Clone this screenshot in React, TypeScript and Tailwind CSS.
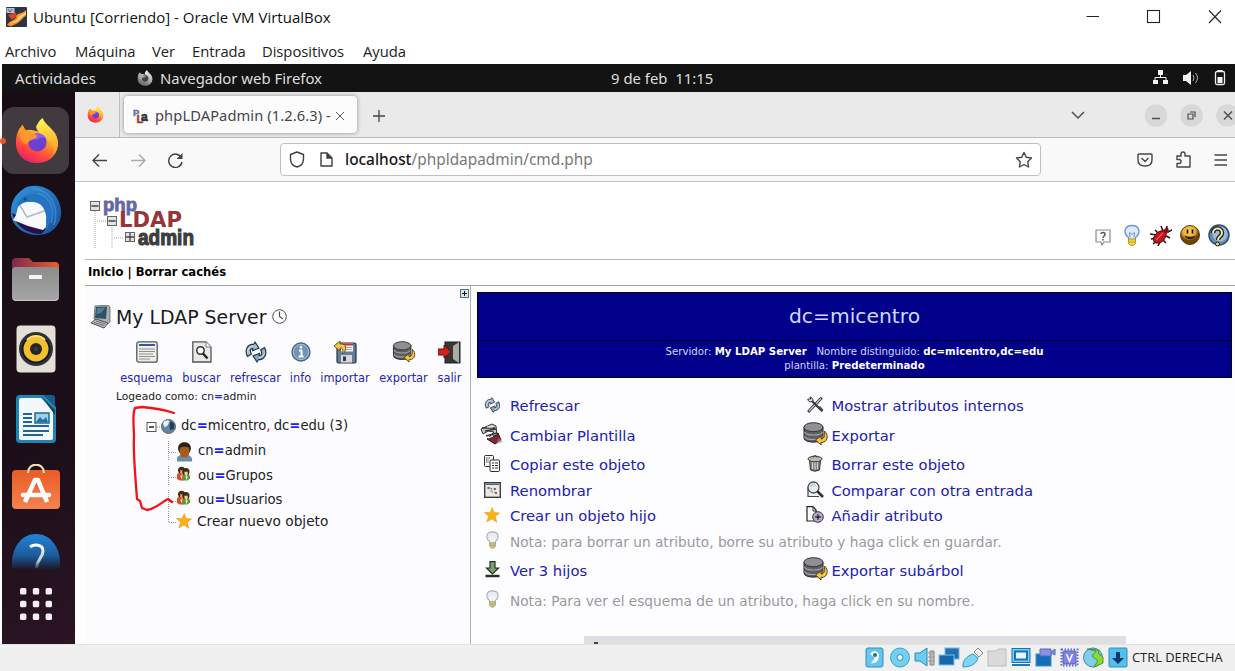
import React from "react";

type P = { className?: string };

/* ---------- Desktop icons ---------- */

const Firefox = ({ className, gray }: P & { gray?: boolean }) => {
  const id = gray ? "g" : "c";
  return (
    <svg className={className} viewBox="0 0 46 48">
      <defs>
        <linearGradient id={`ff-${id}`} x1="0.85" y1="0.05" x2="0.3" y2="1">
          <stop offset="0" stopColor={gray ? "#ddd" : "#fff04a"} />
          <stop offset="0.35" stopColor={gray ? "#bbb" : "#ffa52a"} />
          <stop offset="0.7" stopColor={gray ? "#888" : "#ff4a3c"} />
          <stop offset="1" stopColor={gray ? "#666" : "#e81f6e"} />
        </linearGradient>
        <linearGradient id={`fy-${id}`} x1="0.5" y1="0" x2="0.6" y2="1">
          <stop offset="0" stopColor={gray ? "#eee" : "#fff44f"} />
          <stop offset="1" stopColor={gray ? "#aaa" : "#ff9a26"} />
        </linearGradient>
      </defs>
      <path d="M4 12 L8 7 L11 13 C16 11 20 13 24 14 L30 10 C40 12 46 20 45 29 C43 41 34 47 23 47 C10 47 1 38 1 26 C1 20 2 16 4 12Z" fill={`url(#ff-${id})`} />
      <path d="M22 9 C24 5 26 2 29 0 C31 7 40 11 43 18 C46 26 45 33 40 38 C41 31 39 26 34 22 C30 16 23 16 22 9Z" fill={`url(#fy-${id})`} />
      <circle cx="23.500" cy="25.500" r="9.500" fill={gray ? "#444" : "#6b3fd0"} />
      <path d="M15 20 C19 15 29 14 33 22 C28 19 25 21 23 23Z" fill={gray ? "#666" : "#9059ff"} />
      <path d="M4 12 L8 8 C9 13 17 15 23 18 C24 22 17 22 14 25 C11 29 8 27 6 22Z" fill={gray ? "#aaa" : "#ff9a2a"} opacity="0.9" />
    </svg>
  );
};

const Thunderbird = () => (
  <svg className="h-[51px] w-[52px]" viewBox="0 0 52 51">
    <defs>
      <linearGradient id="tb" x1="0" y1="0" x2="1" y2="1">
        <stop offset="0" stopColor="#2e96dd" />
        <stop offset="1" stopColor="#1a4e9e" />
      </linearGradient>
    </defs>
    <path d="M12 5 C18 -1 33 -1 42 7 C51 15 54 30 48 39 C44 46 37 50 28 50 C14 50 3 42 1 30 C0 18 5 10 12 5Z" fill="url(#tb)" />
    <path d="M2 28 C6 42 18 49 31 49 L36 44 L12 33Z" fill="#25124a" />
    <path d="M8 22 L13 17 L28 16 L36 19 L38 28 L36 35 L37 41 L33 45 L18 41 L3 35 L6 30Z" fill="#f8f9fc" />
    <path d="M9 19 L17 32 L37 25" fill="none" stroke="#b4b9c6" strokeWidth="1.500" />
    <path d="M7 22 C7 12 20 6 32 11 C44 17 44 34 35 47 C37 38 38 27 31 20 C24 15 13 16 7 22Z" fill="#2472c2" />
    <path d="M22 3 C39 5 50 20 44 40M28 8 C42 13 45 26 41 38" fill="none" stroke="#4a9ce0" strokeWidth="1.800" opacity=".55" />
    <circle cx="15" cy="14" r="1.500" fill="#0b4f78" />
  </svg>
);

const Files = () => (
  <svg className="h-[43px] w-[47px]" viewBox="0 0 47 43">
    <defs>
      <linearGradient id="fo" x1="0" x2="1"><stop offset="0" stopColor="#7d2850" /><stop offset="1" stopColor="#e9602c" /></linearGradient>
      <linearGradient id="fg" x1="0" x2="0" y1="0" y2="1"><stop offset="0" stopColor="#8d8d8d" /><stop offset="1" stopColor="#a5a5a5" /></linearGradient>
    </defs>
    <path d="M0 4 Q0 0 4 0 H17 L21 4 H43 Q47 4 47 8 V25 H0Z" fill="url(#fo)" />
    <rect y="9" width="47" height="34" rx="4" fill="url(#fg)" />
    <path d="M1 41 Q3 43 5 42.500 H42 Q45 42.500 46 40" fill="none" stroke="#c4c4c4" />
    <rect x="17" y="17" width="13" height="4" rx="1" fill="#f5f5f5" />
  </svg>
);

const Rhythmbox = () => (
  <svg className="h-[48px] w-[40px]" viewBox="0 0 40 48">
    <rect x=".5" y=".5" width="39" height="47" rx="4" fill="#e4e0d8" />
    <circle cx="20" cy="24" r="17" fill="#30343a" />
    <circle cx="20" cy="24" r="14.500" fill="#191b20" />
    <circle cx="20" cy="24" r="12.500" fill="#f5be2b" />
    <path d="M11 15 A12 12 0 0 1 29 15" stroke="#ffe07a" strokeWidth="2" fill="none" />
    <circle cx="20" cy="24" r="6" fill="#22252a" />
    <circle cx="20" cy="24" r="2" fill="#3b3e44" />
  </svg>
);

const Writer = () => (
  <svg className="h-[48px] w-[40px]" viewBox="0 0 40 48">
    <path d="M4 0 H28 L40 12 V44 Q40 48 36 48 H4 Q0 48 0 44 V4 Q0 0 4 0Z" fill="#2384b4" />
    <path d="M28 0 H36 Q39 0 39 3 V11Z" fill="#155f8b" />
    <path d="M5 3 H25 L37 15 V43 Q37 45 35 45 H5 Q3 45 3 43 V5 Q3 3 5 3Z" fill="#f3f8fb" />
    <path d="M25 1 L39 15 V20Z" fill="#0e4265" />
    <path d="M7 19h9M7 23h9M7 27h9M7 31h26M7 36h26M7 40h20" stroke="#1f6796" strokeWidth="2.200" />
    <rect x="19" y="18" width="14" height="10" fill="#9cd2f0" stroke="#1f6796" strokeWidth="1.500" />
    <path d="M20 27 L24 22 L27 25 L30 22 L32 27Z" fill="#24719f" />
  </svg>
);

const Software = () => (
  <svg className="h-[45px] w-[48px]" viewBox="0 0 48 45">
    <defs><linearGradient id="so" x1="0" x2="0" y1="0" y2="1"><stop offset="0" stopColor="#e95b25" /><stop offset="1" stopColor="#f3834f" /></linearGradient></defs>
    <rect y="6" width="48" height="39" rx="4" fill="url(#so)" />
    <path d="M16 9 C16 -2 32 -2 32 9" fill="none" stroke="#f3dcb8" strokeWidth="2.200" />
    <path d="M13 38 L23 16 H26 L35 38" fill="none" stroke="#fff" strokeWidth="4.500" strokeLinejoin="round" />
    <path d="M11 31 H37" stroke="#fff" strokeWidth="4.500" strokeLinecap="round" />
  </svg>
);

const Help = () => (
  <svg className="h-[36px] w-[48px]" viewBox="0 0 48 36">
    <defs>
      <linearGradient id="he" x1="0" x2="0" y1="0" y2="1"><stop offset="0" stopColor="#2485d8" /><stop offset=".6" stopColor="#1b5b9b" /><stop offset="1" stopColor="#1c1322" /></linearGradient>
      <linearGradient id="hq" x1="0" x2="0" y1="0" y2="1"><stop offset="0" stopColor="#fff" /><stop offset=".7" stopColor="#bcc6d2" /><stop offset="1" stopColor="#33405a" /></linearGradient>
    </defs>
    <path d="M0 36 C-2 16 8 0 24 0 C40 0 50 16 48 36Z" fill="url(#he)" />
    <path d="M18 13 C22 10 31 10 31 17 C31 24 25 25 24.500 34" fill="none" stroke="url(#hq)" strokeWidth="3" />
  </svg>
);

const AppsGrid = () => (
  <svg className="h-8 w-8" viewBox="0 0 32 32" fill="#f4eef4">
    {[0, 12.8, 25.6].map((y) => [0, 12.8, 25.6].map((x) => <rect key={`${x}-${y}`} x={x} y={y} width="6.400" height="6.400" rx="1.500" />))}
  </svg>
);

const VBoxLogo = () => (
  <svg className="h-5 w-[21px]" viewBox="0 0 21 20">
    <rect width="21" height="20" rx="1" fill="#2d3545" />
    <path d="M2 8 L9 5 L11 9 L6 13Z" fill="#d8432a" />
    <path d="M1 18 C4 13 9 14 10 10 C11 5 15 8 20 3 V9 C17 10 16 13 13 15 C10 18 8 17 5 19.500Z" fill="#f8941f" />
    <path d="M4 17 C8 13 11 15 12 11 C13 8 17 8 20 5 V7 C17 9 15 11 13 13 C10 16 7 15 4 17Z" fill="#ffd596" />
    <rect x=".5" y="1" width="8" height="5" fill="#b6bfc9" />
    <path d="M2 2l2 3 2-3" stroke="#555f70" fill="none" />
  </svg>
);

/* ---------- Page icons ---------- */

const RefreshArrows = ({ className }: P) => (
  <svg className={className} viewBox="0 0 22 22" strokeLinejoin="round">
    {["", "rotate(180 11 11)"].map((t) => (
      <g key={t} transform={t}>
        <path d="M2.500 15.500 C-1 9 3 2.500 8.500 3.500 L10 1 L14 7 L7.500 9.800 L7.800 7.300 C5 7.500 4.500 10 6.500 13 Z" fill={t ? "#8aa5c0" : "#a3bace"} stroke="#26374a" strokeWidth="1.200" />
        <path d="M3 12 C2 8 4.500 5 8 5.300" fill="none" stroke="#dbe6ef" strokeWidth="1" />
      </g>
    ))}
  </svg>
);

const Database = ({ className }: P) => (
  <svg className={className} viewBox="0 0 25 24">
    <path d="M1 5 V16 C1 21.500 20 21.500 20 16 V5Z" fill="#5c5e60" stroke="#222" />
    <path d="M1.500 10 C3 14 18 14 19.500 10M1.500 14.500 C3 18.500 18 18.500 19.500 14.500" fill="none" stroke="#a4a6a8" strokeWidth="1.100" />
    <ellipse cx="10.500" cy="5.200" rx="9.500" ry="4.500" fill="#8e9092" stroke="#333" />
    <path d="M21.500 9 C26 13 25 20.500 18 20.500 V23 L12.500 18 L18 14 V17 C21 17 22 14 21.500 9Z" fill="#efc64a" stroke="#5a3f0c" />
  </svg>
);

const Star = ({ className }: P) => (
  <svg className={className} viewBox="0 0 16 16">
    <path d="M8.300.5 L10 5.500 L15.500 6 L11.300 9.400 L12.800 15.300 L8 12 L2.800 14.800 L4.600 9.300 L.5 5.500 L6.200 5.400Z" fill="#fcaf1b" stroke="#e89b16" strokeWidth=".6" />
  </svg>
);

const Bulb = ({ className, lit }: P & { lit?: boolean }) => (
  <svg className={className} viewBox="0 0 16 22">
    <path d="M4.500 13 C-1 9 0 1 8 1 C16 1 17 9 11.500 13 V16 H4.500Z" fill={lit ? "#dceafc" : "#e9ebf0"} stroke={lit ? "#6d95cc" : "#a9aeb8"} strokeWidth="1.300" />
    <path d="M6 13 L5.500 8 L8 10 L10.500 8 L10 13" fill="none" stroke={lit ? "#7795c0" : "#fff"} />
    <path d="M4.500 14.500 H11.500 V19 L9.500 21 H6.500 L4.500 19Z" fill={lit ? "#f2d33a" : "#cfc97c"} stroke={lit ? "#a88c16" : "#979350"} strokeWidth=".8" />
    <path d="M5 17.500h6" stroke={lit ? "#c29c12" : "#888"} strokeWidth=".8" />
  </svg>
);

const Computer = () => (
  <svg className="h-6 w-[22px]" viewBox="0 0 22 24">
    <path d="M5 1 L18 0 L20 2 V17 L16 20 L4 14Z" fill="#a9afb2" stroke="#53585a" strokeWidth=".7" />
    <path d="M6 2 L17 1.500 L16 14 L5 13Z" fill="#2f5269" />
    <path d="M7 3 L15.500 2.500 L11 8 L6.500 9Z" fill="#547c92" />
    <path d="M1 18 L6 14 L18 18 L14 23Z" fill="#b9bab3" stroke="#4d5154" />
    <path d="M4 17.500 L14 20.500M6 16 L15.500 19" stroke="#73777a" />
  </svg>
);

const Clock = () => (
  <svg className="h-[15px] w-[15px]" viewBox="0 0 15 15" fill="none" stroke="#4b4b4b">
    <circle cx="7.500" cy="7.500" r="6.800" fill="#fff" /><path d="M7.500 2.500V7.500L11 10" strokeWidth="1.200" />
  </svg>
);

const Schema = () => (
  <svg className="h-[22px] w-[22px]" viewBox="0 0 22 22">
    <rect x=".8" y=".8" width="20.400" height="20.400" rx="2" fill="#eeefeb" stroke="#555753" strokeWidth="1.300" />
    <path d="M3 4h16" stroke="#204a87" strokeWidth="1.800" />
    <path d="M3 8h16M3 10.500h16M3 13h14M3 15.500h16M3 18h11" stroke="#90928e" strokeWidth="1.100" />
  </svg>
);

const Search = () => (
  <svg className="h-[22px] w-5" viewBox="0 0 20 22">
    <path d="M.8 .8 H14 L19 6 V21 H.8Z" fill="#e8e9e5" stroke="#555753" strokeWidth="1.300" />
    <path d="M14 1 V6 H19" fill="#fff" stroke="#777" />
    <circle cx="8.500" cy="9.500" r="3.700" fill="#fafafa" stroke="#333" strokeWidth="1.500" />
    <path d="M11 12.500 L15.500 17.500" stroke="#222" strokeWidth="2.500" />
  </svg>
);

const Info = () => (
  <svg className="h-5 w-5" viewBox="0 0 20 20">
    <circle cx="10" cy="10" r="9" fill="#7391b5" stroke="#4b6689" strokeWidth="1.400" />
    <circle cx="10" cy="10" r="7.600" fill="none" stroke="#a9bed6" />
    <path d="M8 8.500h2.500V14M7.500 14.500h5" stroke="#fff" strokeWidth="2" fill="none" /><circle cx="10" cy="5.300" r="1.300" fill="#fff" />
  </svg>
);

const Import = () => (
  <svg className="h-[23px] w-[23px]" viewBox="0 0 23 23">
    <rect x="3" y="2" width="19" height="20" rx="1.500" fill="#637e9a" stroke="#29323b" strokeWidth="1.200" />
    <rect x="7" y="2.500" width="12" height="8" fill="#f4f4f2" />
    <path d="M7 3.500h12" stroke="#cc2c2c" strokeWidth="2" /><path d="M8 6.500h10M8 8.500h10" stroke="#aaa" />
    <rect x="7" y="14" width="11" height="7.500" fill="#d7d9d8" /><rect x="9" y="15.500" width="3" height="4.500" fill="#303a48" />
    <path d="M0 5 L6 0 L6 3 C13 2 13 9 9 13 C9 9 9 7 6 7 V10Z" fill="#f1c64d" stroke="#674b13" strokeWidth=".9" />
  </svg>
);

const Exit = () => (
  <svg className="h-[23px] w-[23px]" viewBox="0 0 23 23">
    <rect x="7" y="1" width="15" height="21" fill="#343735" stroke="#222" />
    <path d="M15 5 L21 1 V22 L15 18Z" fill="#a8ada8" />
    <path d="M0 8 H6 V4 L13 11 L6 17 V14 H0Z" fill="#d62020" stroke="#6b0b0b" />
  </svg>
);

const Globe = () => (
  <svg className="h-[15px] w-[15px]" viewBox="0 0 16 16">
    <circle cx="8" cy="8" r="7.500" fill="#62849e" stroke="#556775" />
    <path d="M2 5 C5 0 9 1 9 3 L7 7 L4 9Z" fill="#dce6ec" /><path d="M10 2 L14 5 L14 10 L10 12 L9 8Z" fill="#263e57" /><circle cx="5" cy="4" r="2.200" fill="#fff" opacity=".6" />
  </svg>
);

const Person = () => (
  <svg className="h-[21px] w-[17px]" viewBox="0 0 18 21">
    <path d="M1 21 V18 C2 14 6 14 9 14 C13 14 16 15 17 18 V21Z" fill="#6f8cab" />
    <path d="M2.500 9 C0-2 18-2 15.500 9 L14 12 H4Z" fill="#27211f" />
    <path d="M4 7 C6 5 12 5 14 7 V11 C14 15 12 17 9 17 C6 17 4 15 4 11Z" fill="#a85b16" />
  </svg>
);

const Group = () => (
  <svg className="h-[15px] w-[15px]" viewBox="0 0 16 15">
    <path d="M1 13 V9 C2 6 6 6 8 9 V15 H4Z" fill="#d84a22" /><path d="M7 15 V9 C9 6 14 6 15 11 V13 L12 15Z" fill="#5c993d" />
    <circle cx="6" cy="4" r="3.800" fill="#4a2c17" /><path d="M4.500 4h3.500v3l-1.500 2-2-2z" fill="#e9a462" />
    <circle cx="10.500" cy="5.500" r="3.900" fill="#3a2e22" /><path d="M9 5.500h3.500v3l-1.500 2-2-2z" fill="#f0d07e" />
    <path d="M4.500 9.500 L6 14 L7 9.500Z" fill="#f4e4df" /><path d="M10 10.500 L11.500 14.500 L12.500 10.500Z" fill="#f1f5e8" />
  </svg>
);

const Template = () => (
  <svg className="h-[22px] w-6" viewBox="0 0 24 22">
    <path d="M7 16 L18 10 L21 17 L15 21Z" fill="#822536" stroke="#3b1118" />
    <path d="M19 15 L23 19 L16 21Z" fill="#999" opacity=".6" />
    <path d="M1 6 L12 1 L16 3 L17 12 L9 14 L14 9 L8 8 L3 11Z" fill="#c5cac8" stroke="#2e3230" />
    <path d="M2 5 H15M5 8 L16 6M6 13 L17 10M9 16 L18 12" stroke="#343836" strokeWidth="1.300" />
    <path d="M7 4H13M8 15 L13 13" stroke="#fff" strokeWidth="1.200" />
  </svg>
);

const Copy = () => (
  <svg className="h-[17px] w-4" viewBox="0 0 16 17" fill="#f9f9f9" stroke="#303030">
    <rect x=".5" y=".5" width="9" height="11" rx="1" /><path d="M2 3h4M2 5h3M2 7h3" strokeDasharray="1.500 1" /><rect x="6" y="5" width="9.500" height="11.500" rx="1" /><path d="M8 8h2M11 8h3M8 10.500h2M11 10.500h3M8 13h2M11 13h3" />
  </svg>
);

const Rename = () => (
  <svg className="h-4 w-[17px]" viewBox="0 0 17 16">
    <rect x=".7" y=".7" width="15.600" height="14.600" fill="#e7e8e2" stroke="#333" strokeWidth="1.300" />
    <path d="M2 2.300h13" stroke="#3e6077" strokeWidth="1.300" /><path d="M4 6h3v4h4M7 7h4" fill="none" stroke="#777" strokeDasharray="1.500 1" /><path d="M3.500 5h2v2h-2zM10 6h2v2h-2zM11 10h2v2h-2z" fill="#866" />
  </svg>
);

const Down = () => (
  <svg className="h-[17px] w-[15px]" viewBox="0 0 15 17">
    <path d="M5 .7 H10 V7 H13.500 L7.500 13 L1.500 7 H5Z" fill="#7ca36e" stroke="#243123" strokeWidth="1.200" /><path d="M.5 15H14.500" stroke="#243123" strokeWidth="2.500" />
  </svg>
);

const Tools = () => (
  <svg className="h-[17px] w-[17px]" viewBox="0 0 17 17">
    <path d="M2 15 L14 2.500" stroke="#333" strokeWidth="3" strokeLinecap="round" /><path d="M2 15 L14 2.500" stroke="#c8cccc" strokeWidth="1.200" />
    <path d="M3 3 L14 14" stroke="#383838" strokeWidth="2.200" /><path d="M.8 3 C1 6 4 6.500 6 5 C6 3 5 1 3 1L4 3Z" fill="#ddd" stroke="#333" />
    <path d="M11 12 L13 10 L16.500 14 L14.500 16.200Z" fill="#444" />
  </svg>
);

const Trash = () => (
  <svg className="h-[17px] w-4" viewBox="0 0 16 17">
    <path d="M2.500 5 L3.500 15 Q8 17.500 12.500 15 L13.500 5Z" fill="#7e7f78" stroke="#333" /><path d="M5.500 7v7M8 7v7.500M10.500 7v7" stroke="#d1d2cc" strokeWidth="1.200" />
    <ellipse cx="8" cy="4" rx="7" ry="2.800" fill="#b9b9b2" stroke="#3e403c" /><path d="M6 2.500C6 0 10 0 10 2.500" fill="none" stroke="#333" />
  </svg>
);

const Compare = () => (
  <svg className="h-[17px] w-[17px]" viewBox="0 0 17 17">
    <path d="M1 6V15.500H12" fill="#eee" stroke="#444" strokeWidth="1.200" /><circle cx="6.500" cy="6.500" r="5.500" fill="#e5ecf0" stroke="#4a4a4a" strokeWidth="1.300" />
    <path d="M3 6 C4 3 7 3 9 5" fill="none" stroke="#a3b2bd" /><path d="M10 10L16 16" stroke="#303030" strokeWidth="2.600" />
  </svg>
);

const AddAttr = () => (
  <svg className="h-[17px] w-[18px]" viewBox="0 0 18 17">
    <path d="M1 .7H7L10 4V15H1Z" fill="#fff" stroke="#222" strokeWidth="1.200" /><path d="M7 1v4h4" fill="none" stroke="#333" />
    <circle cx="12" cy="11" r="5.300" fill="#b6a9c2" stroke="#393440" /><path d="M12 8.300v5.400M9.300 11h5.400" stroke="#252035" strokeWidth="1.300" />
  </svg>
);

const TopIcons = () => (
  <div className="mt-[41px] mr-[2px] grid h-6 w-[145px] grid-cols-5 items-center justify-items-center">
    <svg className="mt-1 h-[17px] w-4" viewBox="0 0 16 17">
      <path d="M1 1H15V13H9L7 16L6 13H1Z" fill="#fbfbfb" stroke="#8b8b8b" strokeWidth="1.200" /><path d="M6 5C6 3 10 3 10 5.500C10 7 8 7 8 9M8 10v1.500" stroke="#555" strokeWidth="1.500" fill="none" />
    </svg>
    <Bulb lit className="h-[23px] w-4" />
    <svg className="h-[22px] w-[23px]" viewBox="0 0 23 22">
      <path d="M1 10L8 11M2 15L8 14M4 20L9 16M9 22L11 18M12 2L14 7M18 2L17 6M19 8L23 6M17 12L21 14M14 16L17 19M6 6L9 9" stroke="#3c0808" strokeWidth="1.500" />
      <path d="M5 13C7 8 13 5 17 8C18 14 13 20 7 19C4 18 4 15 5 13Z" fill="#c1121c" stroke="#4c090b" />
      <path d="M14 6L19 3L20 8L17 10Z" fill="#871016" /><path d="M7 16L14 9" stroke="#f2606a" strokeWidth="1.300" />
    </svg>
    <svg className="h-5 w-5" viewBox="0 0 20 20">
      <defs><radialGradient id="smile" cx=".45" cy=".3"><stop offset="0" stopColor="#ffdc62" /><stop offset=".7" stopColor="#e5a52a" /><stop offset="1" stopColor="#6a420a" /></radialGradient></defs>
      <circle cx="10" cy="10" r="9.500" fill="url(#smile)" stroke="#5a3b10" /><path d="M7.500 4.500v4M12.500 4.500v4" stroke="#181008" strokeWidth="1.700" /><path d="M4.500 10.500C6 15.500 14 15.500 15.500 10.500Q10 13 4.500 10.500" fill="#33200e" />
    </svg>
    <svg className="h-[23px] w-[23px]" viewBox="0 0 23 23">
      <circle cx="12" cy="11" r="10" fill="#648db3" stroke="#354e65" strokeWidth="1.500" /><circle cx="13" cy="10" r="7.500" fill="#9cbbd4" />
      <path d="M6 9C6 3 15 3 15 9C15 13 11 12 11 16" fill="none" stroke="#211a10" strokeWidth="4.500" /><path d="M6 9C6 3 15 3 15 9C15 13 11 12 11 16" fill="none" stroke="#f3e6b6" strokeWidth="2" />
      <circle cx="10.500" cy="20" r="2" fill="#efdca0" stroke="#221a10" />
    </svg>
  </div>
);

const Logo = () => (
  <svg className="h-[54px] w-[108px]" viewBox="0 0 108 54">
    <path d="M6 14V52M8 24H17M23 30V52M25 41H34" stroke="#aaa" strokeDasharray="1 1" fill="none" />
    <g fill="#e2e2e2" stroke="#666"><rect x="1.500" y="4.500" width="9" height="9" /><rect x="18.500" y="19.500" width="9" height="9" /><rect x="36.500" y="35.500" width="9" height="9" /></g>
    <path d="M2.500 9h7M19.500 24h7M37 40h8M41 36v8" stroke="#444" strokeWidth="1.300" />
    <text x="14" y="13.500" fontSize="18" fontFamily="Liberation Sans" fontWeight="700" fill="#6666a6" stroke="#6666a6" strokeWidth=".8" textLength="34" lengthAdjust="spacingAndGlyphs">php</text>
    <text x="30" y="30" fontSize="20.500" fontFamily="DejaVu Sans" fontWeight="700" fill="#963439" textLength="63" lengthAdjust="spacingAndGlyphs">LDAP</text>
    <text x="49" y="48" fontSize="22.500" fontFamily="Liberation Sans" fontWeight="700" fill="#3d3d3d" stroke="#3d3d3d" strokeWidth="1.200" textLength="56" lengthAdjust="spacingAndGlyphs">admin</text>
  </svg>
);

/* ---------- Window chrome ---------- */

const TitleBar = () => (
  <div className="flex h-[34px] shrink-0 items-center pl-1.5 font-['Open_Sans',sans-serif] text-[#111]">
    <div className="mr-[6px] mb-[1px]"><VBoxLogo /></div>
    <span className="text-[15px] whitespace-nowrap">Ubuntu [Corriendo] - Oracle VM VirtualBox</span>
    <svg className="mr-[-1px] ml-auto h-4 w-[150px]" viewBox="0 0 150 16" fill="none" stroke="#222" strokeWidth="1.100">
      <path d="M.5 7.500H13M123 1.500L135 14M135 1.500L123 14" /><rect x="61.500" y="1.500" width="12" height="12" />
    </svg>
  </div>
);

const MenuBar = () => (
  <div className="flex h-[30px] shrink-0 items-center pt-[4px] pl-[5px] font-['Open_Sans',sans-serif] text-[14.800px] tracking-[-0.050px] text-[#222]">
    <span className="w-[70px]">Archivo</span><span className="w-[77px]">Máquina</span><span className="w-[40px]">Ver</span>
    <span className="w-[70px]">Entrada</span><span className="w-[101px]">Dispositivos</span><span>Ayuda</span>
  </div>
);

const TopBar = () => (
  <div className="flex h-[28px] shrink-0 items-center bg-[#131313] font-['Noto_Sans',sans-serif] text-[14.900px] text-[#dedede]">
    <span className="ml-[13px] w-[122px] tracking-[0.150px]">Actividades</span>
    <Firefox gray className="h-4 w-4" />
    <span className="ml-[7px] w-[451px]">Navegador web Firefox</span>
    <span className="whitespace-pre">9 de feb  11:15</span>
    <svg className="mr-2 ml-auto h-4 w-[75px]" viewBox="0 0 75 16" fill="#f2f2f2">
      <rect x="6" y="0" width="5" height="5" /><rect x="1" y="10" width="5" height="4" /><rect x="11" y="10" width="5" height="4" /><path d="M8.500 4v4M3 11V7.500H14V11" stroke="#f2f2f2" fill="none" />
      <path d="M31 5h3l5-4v14l-5-4h-3z" /><path d="M41 5q2 3 0 6M43.500 3q4 5 0 10" stroke="#aaa" fill="none" />
      <rect x="63.500" y="1.500" width="9" height="13" rx="1.500" stroke="#eee" strokeWidth="1.300" fill="none" /><rect x="65.500" y="7" width="5" height="6" /><rect x="65.500" width="5" height="1.500" />
    </svg>
  </div>
);

const Dock = () => (
  <div className="flex w-[73px] shrink-0 flex-col items-center bg-[linear-gradient(155deg,#170c14_0%,#1c0f19_65%,#2b1424_100%)] pr-[6px]">
    <div className="mt-[15px] flex h-[67px] w-[67px] shrink-0 items-center justify-center rounded-[12px] bg-[#413b40]">
      <i className="-ml-[1px] mr-[9px] h-[6px] w-[6px] shrink-0 rounded-full bg-[#e9541f]" /><Firefox className="mr-[11px] h-[46px] w-[44px] shrink-0" />
    </div>
    <div className="mt-[11px]"><Thunderbird /></div>
    <div className="mt-[22px]"><Files /></div>
    <div className="mt-6"><Rhythmbox /></div>
    <div className="mt-[22px]"><Writer /></div>
    <div className="mt-[21px]"><Software /></div>
    <div className="mt-[25px]"><Help /></div>
    <div className="mt-[18px]"><AppsGrid /></div>
  </div>
);

const FavIcon = () => (
  <svg className="h-4 w-4 overflow-visible" viewBox="0 0 16 16"><g fontFamily="Liberation Sans" fontWeight="700">
    <text x="0" y="8" fontSize="9.500" fill="#7372a3" stroke="#7372a3" strokeWidth=".5">P</text><text x="3.500" y="15" fontSize="11" fill="#963b42" stroke="#963b42" strokeWidth=".5">L</text><text x="8" y="13" fontSize="12" fill="#333" stroke="#333" strokeWidth=".7">a</text></g></svg>
);

const Tabs = () => (
  <div className="flex h-[46px] shrink-0 border-b border-[#b9b9bb] bg-[#eaeaeb] font-['Noto_Sans',sans-serif]">
    <div className="flex w-[45px] items-center justify-center border-r border-[#c0c0c0] pr-1"><Firefox className="h-[17px] w-[17px]" /></div>
    <div className="my-[4px] ml-[4px] flex w-[233px] items-center rounded-[4px] bg-[#fcfcfd] pt-[2px] pl-[9px] text-[14.700px] text-[#45454b] shadow-[0_0_4px_rgba(0,0,0,0.4)]">
      <FavIcon /><span className="ml-[6px] w-[178px] whitespace-nowrap tracking-[0.080px]">phpLDAPadmin (1.2.6.3) -</span>
      <svg className="ml-[3px] h-2 w-2" viewBox="0 0 8 8" stroke="#555"><path d="M0 0L8 8M8 0L0 8" /></svg>
    </div>
    <svg className="mt-[18px] ml-4 h-3 w-3" viewBox="0 0 12 12" stroke="#444" strokeWidth="1.300"><path d="M0 6h12M6 0v12" /></svg>
    <svg className="mt-[12px] ml-auto h-[23px] w-[164px] shrink-0" viewBox="0 0 164 23" fill="none" stroke="#505050" strokeWidth="1.500">
      <path d="M1 8L7 14L13 8" /><g fill="#d8d8d8" stroke="none"><circle cx="85" cy="11.500" r="11.300" /><circle cx="120.500" cy="11.500" r="11.300" /><circle cx="156.500" cy="11.500" r="11.300" /></g>
      <path d="M81 14.500h8M153 7.500L161 15.500M161 7.500L153 15.500" /><path d="M117 10h5v5h-5zM119 8h5v5" strokeWidth="1.200" />
    </svg>
  </div>
);

const Toolbar = () => (
  <div className="flex h-[44px] shrink-0 items-center border-b border-[#c5c5c8] bg-[#f9f9fa]">
    <svg className="ml-[17px] h-4 w-[92px]" viewBox="0 0 92 16" fill="none" stroke="#444" strokeWidth="1.400">
      <path d="M15 8.500H1M7 2.500L1 8.500L7 14.500" /><path d="M39 8.500H53M47 2.500L53 8.500L47 14.500" stroke="#aaa" /><path d="M89.500 6A6.700 6.700 0 1 0 90 10" /><path d="M90.500 1V7H84.500Z" fill="#444" stroke="none" />
    </svg>
    <div className="ml-[96px] flex h-[33px] w-[761px] items-center rounded-[4px] border border-[#bfbfc2] bg-white pl-2">
      <svg className="h-[17px] w-[46px]" viewBox="0 0 46 17" fill="none" stroke="#3f3f3f" strokeWidth="1.400">
        <path d="M8 1L14.500 3.500V8C14.500 12 11.500 15 8 16C4.500 15 1.500 12 1.500 8V3.500Z" strokeLinejoin="round" /><path d="M32 2H38L43 7V15H32Z" strokeLinejoin="round" /><path d="M38 2V7H43" fill="#444" />
      </svg>
      <span className="ml-[10px] font-['Noto_Sans',sans-serif] text-[15.400px] whitespace-nowrap text-[#777]"><b className="font-medium text-[#151515]">localhost</b>/phpldapadmin/cmd.php</span>
      <svg className="mr-[7px] ml-auto h-[18px] w-[18px]" viewBox="0 0 18 18" fill="none" stroke="#454545" strokeWidth="1.400" strokeLinejoin="round"><path d="M9 1.500L11.300 6.200L16.500 7L12.700 10.700L13.600 16L9 13.500L4.400 16L5.300 10.700L1.500 7L6.700 6.200Z" /></svg>
    </div>
    <svg className="mr-[7px] ml-auto h-[18px] w-[91px]" viewBox="0 0 91 18" fill="none" stroke="#454545" strokeWidth="1.400" strokeLinejoin="round">
      <path d="M2 3H14Q15 3 15 4V9Q15 15 8 15Q1 15 1 9V4Q1 3 2 3M4.500 7L8 10.500L11.500 7" />
      <path d="M40 5H44V3Q44 1 46 1Q48 1 48 3V5H53V16H40V12.500H42Q44 12.500 44 10.500Q44 8.500 42 8.500H40Z" /><path d="M77.500 4H90M77.500 9H90M77.500 14H90" />
    </svg>
  </div>
);

/* ---------- phpLDAPadmin ---------- */

const tools = [
  { label: "esquema", w: "w-[53px]", icon: <Schema /> },
  { label: "buscar", w: "w-[39px]", icon: <Search /> },
  { label: "refrescar", w: "w-[51px]", icon: <RefreshArrows className="h-[22px] w-[22px]" /> },
  { label: "info", w: "w-[21px]", icon: <Info /> },
  { label: "importar", w: "w-[50px]", icon: <Import /> },
  { label: "exportar", w: "w-[49px]", icon: <Database className="h-[22px] w-6" /> },
  { label: "salir", w: "w-[25px]", icon: <Exit /> },
];

const Eq = () => <b className="text-[#2323f4]">=</b>;

const Branch = ({ className, last }: P & { last?: boolean }) => (
  <svg className={className} viewBox="0 0 8 20" fill="none" stroke="#999" strokeDasharray="1 1">
    <path d={last ? "M.5 0V11.500H8" : "M.5 0V20M1 11.500H8"} />
  </svg>
);

const TreePane = () => (
  <div className="relative flex w-[386px] shrink-0 flex-col border-r border-[#a9abc8] bg-[#fcfcff] text-[#222]">
    <svg className="absolute top-[3px] right-[1px] h-[9px] w-[9px]" viewBox="0 0 9 9"><rect x=".5" y=".5" width="8" height="8" fill="#dce3e6" stroke="#527080" /><path d="M2 4.500h5M4.500 2v5" stroke="#111" /></svg>
    <div className="mt-[17px] flex h-[28px] items-center pl-[5px]">
      <Computer /><span className="ml-[4px] w-[152px] text-[18.900px] whitespace-nowrap text-[#1b1b1b]">My LDAP Server</span><span className="mb-[2px] ml-1"><Clock /></span>
    </div>
    <div className="mt-[9px] flex gap-[9px] pl-[36px] text-[11.400px] text-[#2626ad]">
      {tools.map((t) => (
        <div key={t.label} className={`-ml-[1px] mr-[1px] flex flex-col items-center ${t.w}`}>
          <div className="flex h-6 items-center justify-center">{t.icon}</div>
          <span className="mt-[7px] leading-[14px] whitespace-nowrap">{t.label}</span>
        </div>
      ))}
    </div>
    <div className="mt-[5px] pl-[31px] text-[10.700px] leading-[14px]">Logeado como: cn<Eq />admin</div>
    <div className="mt-[9px] text-[13.200px] whitespace-nowrap">
      <div className="flex h-[26px] items-center pl-[61px]">
        <svg className="h-[15px] w-[15px]" viewBox="0 0 15 15"><rect x="1" y="3.500" width="9" height="9" fill="#fff" stroke="#555" /><path d="M3 8h5" stroke="#111" strokeWidth="1.400" /><path d="M11 8h4" stroke="#888" strokeDasharray="1 1" /></svg>
        <Globe /><span className="ml-[5px]">dc<Eq />micentro<span className="tracking-[-0.500px] text-red-600">, </span>dc<Eq />edu (3)</span>
      </div>
      <div className="flex h-[24px] items-center pl-[83px]"><Branch className="h-5 w-[8px]" /><Person /><span className="ml-[5px]">cn<Eq />admin</span></div>
      <div className="flex h-[25px] items-center pl-[83px]"><Branch className="h-5 w-[8px]" /><span className="mb-1"><Group /></span><span className="ml-[7px]">ou<Eq />Grupos</span></div>
      <div className="flex h-[23px] items-center pl-[83px]"><Branch className="h-5 w-[8px]" /><span className="mb-1"><Group /></span><span className="ml-[7px]">ou<Eq />Usuarios</span></div>
      <div className="flex h-[20px] items-center pl-[83px]"><Branch last className="h-5 w-[8px]" /><Star className="h-4 w-4" /><span className="ml-[5px] text-[13.700px]">Crear nuevo objeto</span></div>
    </div>
    <svg className="absolute top-[119px] left-[45px] h-[112px] w-[52px]" viewBox="0 0 52 112" fill="none" stroke="#f31219" strokeWidth="2.300" strokeLinecap="round" strokeLinejoin="round">
      <path d="M44 8C38 6 25 3 12 2L5 3C2 10 4 20 4 32C3 48 5 65 7 94L10 96L12 103L17 105C28 103 33 96 38 94L42 97" />
    </svg>
  </div>
);

type Act = [React.ReactNode, string];

const Action = ({ item, className }: { item?: Act; className: string }) => (
  <div className={`flex w-[321.500px] items-center ${className}`}>
    {item && (<><div className="mb-[4px] flex w-[35px] shrink-0 items-center justify-center">{item[0]}</div><a className="whitespace-nowrap text-[#2020b4]">{item[1]}</a></>)}
  </div>
);

const ActionRow = ({ h, left, right }: { h: string; left: Act; right?: Act }) => (
  <div className={`flex ${h}`}><Action item={left} className="[&>div]:pr-[1px]" /><Action item={right} className="[&>div]:pl-[2px]" /></div>
);

const Note = ({ h, text }: { h: string; text: string }) => (
  <div className={`flex items-center text-[13.700px] text-[#999] ${h}`}>
    <div className="mb-[5px] flex w-[35px] shrink-0 justify-center pr-[1px]"><Bulb className="h-[18px] w-[13px]" /></div><span className="whitespace-nowrap">{text}</span>
  </div>
);

const EntryPane = () => (
  <div className="flex min-w-0 flex-1 flex-col bg-[#fdfdff] pt-[6px] pr-[3px] pl-[6px]">
    <div className="flex h-[86px] shrink-0 flex-col border border-[#000018] bg-[#00008b] text-center text-[#d3d7ff]">
      <h1 className="flex h-[48px] shrink-0 items-center justify-center border-b border-[#00001c] text-[20.300px]">dc=micentro</h1>
      <div className="pt-[4px] text-[10.200px] leading-[13.500px] whitespace-pre">Servidor: <b className="text-white">My LDAP Server</b>   Nombre distinguido: <b className="text-white">dc=micentro,dc=edu</b><br />plantilla: <b className="text-white">Predeterminado</b></div>
    </div>
    <div className="mt-[14px] -ml-[2px] text-[14.750px]">
      <ActionRow h="h-[29px]" left={[<RefreshArrows className="h-4 w-[17px]" />, "Refrescar"]} right={[<Tools />, "Mostrar atributos internos"]} />
      <ActionRow h="h-[30px]" left={[<Template />, "Cambiar Plantilla"]} right={[<Database className="h-6 w-[25px]" />, "Exportar"]} />
      <ActionRow h="h-[28px]" left={[<Copy />, "Copiar este objeto"]} right={[<Trash />, "Borrar este objeto"]} />
      <ActionRow h="h-[25px]" left={[<Rename />, "Renombrar"]} right={[<Compare />, "Comparar con otra entrada"]} />
      <ActionRow h="h-[25px]" left={[<Star className="h-4 w-4" />, "Crear un objeto hijo"]} right={[<AddAttr />, "Añadir atributo"]} />
      <Note h="h-[27px]" text="Nota: para borrar un atributo, borre su atributo y haga click en guardar." />
      <ActionRow h="h-[30px]" left={[<Down />, "Ver 3 hijos"]} right={[<Database className="h-6 w-[25px]" />, "Exportar subárbol"]} />
      <Note h="h-[30px]" text="Nota: Para ver el esquema de un atributo, haga click en su nombre." />
    </div>
    <div className="mt-auto ml-[107px] h-[8px] w-[542px] bg-[#dfdfdf] pt-[6px] pl-[10px]"><div className="h-[2px] w-[4px] bg-[#444]" /></div>
  </div>
);

const StatusBar = () => (
  <div className="flex h-[27px] shrink-0 items-center justify-end border-t border-[#e4e4e4] bg-[#f0f0f0] font-['Open_Sans',sans-serif] text-[12.900px] text-[#222]">
    <svg className="mr-[3px] h-[22px] w-[264px]" viewBox="0 0 264 22">
      <rect x="1" y="1" width="17" height="19" rx="2" fill="#62c6ed" stroke="#348db7" /><path d="M5 7C8 2 15 4 14 10C13 15 10 17 6 16L10 11" fill="#f7fdff" /><circle cx="10" cy="8" r="2" fill="#2369ae" />
      <circle cx="35" cy="10.500" r="9.500" fill="#72d1f1" stroke="#3ba1c6" /><circle cx="35" cy="10.500" r="3" fill="#eafaff" stroke="#288fb8" />
      <path d="M50 6h5l7-5v18l-7-5h-5z" fill="#6bcdef" stroke="#2687b6" /><path d="M65 4h4v14h-4z" fill="#bbb" stroke="#888" /><path d="M63 6h7M63 10h7M63 14h7" stroke="#999" />
      <rect x="80" y="1" width="14" height="11" fill="#246eb3" stroke="#75b8e4" /><rect x="74" y="8" width="15" height="10" fill="#1767ad" stroke="#73c0ea" />
      <path d="M98 20C97 14 102 9 108 7L113 11C112 15 108 20 98 20Z" fill="#7ed6f5" stroke="#2896c5" /><path d="M109 5L113 1L118 6L114 10Z" fill="#eee" stroke="#888" />
      <path d="M123 4h8l2-2h8v17h-18z" fill="#dadada" stroke="#bbb" />
      <rect x="147" y="1.500" width="18" height="14" fill="#75d0ef" stroke="#226eaa" /><rect x="150" y="4.500" width="12" height="8" fill="#e9f6ff" stroke="#1773bd" strokeWidth="2" /><path d="M147 18h18" stroke="#227ab0" strokeWidth="2" />
      <rect x="171" y="7" width="15" height="12" fill="#176cb8" stroke="#3c91c6" /><path d="M175 2h11v7h-11zM186 5l4-3v6l-4-2" fill="#8993e0" stroke="#5969b8" />
      <rect x="196.500" y="2.500" width="16" height="16" fill="none" stroke="#6168bf" strokeWidth="2" strokeDasharray="1.500 1.500" /><rect x="198" y="4" width="13" height="13" rx="1" fill="#7f83e2" stroke="#5a5fc4" /><path d="M201.500 7L204.500 14L207.500 7" fill="none" stroke="#fff" strokeWidth="1.500" />
      <circle cx="228" cy="10.500" r="9.500" fill="#7fcdec" stroke="#4785ad" /><path d="M222 2L231 4L227 9L233 14L229 20L238 16V10L234 7L233 3Z" fill="#85da37" stroke="#4b962a" />
      <rect x="244" y="1" width="18" height="19" rx="1" fill="#52bfed" stroke="#2f8fbc" /><path d="M251 5h4v6h4l-6 6-6-6h4z" fill="#123768" />
    </svg>
    <span className="mr-[10px] w-[93px] whitespace-nowrap">CTRL DERECHA</span>
  </div>
);

export default function App() {
  return (
    <div className="flex h-[671px] w-[1235px] flex-col overflow-hidden bg-white">
      <TitleBar />
      <MenuBar />
      <div className="flex min-h-0 flex-1 flex-col pl-[2px]">
        <TopBar />
        <div className="flex min-h-0 flex-1">
          <Dock />
          <main className="flex min-w-0 flex-1 flex-col">
            <Tabs />
            <Toolbar />
            <div className="flex min-h-0 flex-1 flex-col pl-[10px] font-['DejaVu_Sans',sans-serif]">
              <header className="flex h-[78px] shrink-0 justify-between border-b border-[#b3b5bf] pt-[15px] pl-[4px]"><Logo /><div className="-mt-[15px]"><TopIcons /></div></header>
              <nav className="flex h-[26px] shrink-0 items-center border-b border-[#9fa1b5] pl-[3px] text-[11.600px] font-bold text-black">Inicio | Borrar cachés</nav>
              <div className="flex min-h-0 flex-1"><TreePane /><EntryPane /></div>
            </div>
          </main>
        </div>
      </div>
      <StatusBar />
    </div>
  );
}
